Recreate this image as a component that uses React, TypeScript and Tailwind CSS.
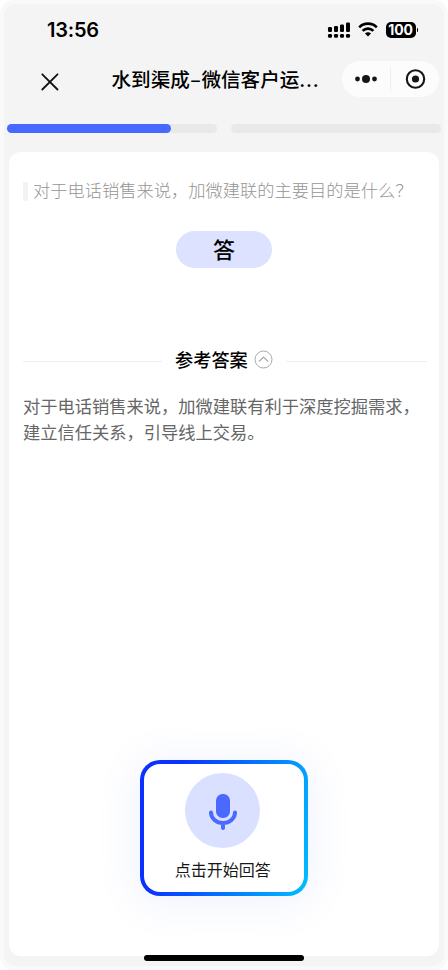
function StatusBar() {
  return (
    <div className="flex h-[52px] items-center justify-between pl-[43px] pr-[26px] font-['Inter','Liberation_Sans',sans-serif]">
      <span className="text-[20px] leading-6 font-semibold tracking-[-0.2px]">13:56</span>
      <div className="flex items-center">
        <svg width="24" height="17" viewBox="0 0 24 17">
          <rect x="1" y="5" width="4" height="5" rx="1.3" />
          <rect x="7" y="4" width="4" height="6" rx="1.3" />
          <rect x="13" y="2.5" width="4" height="7.5" rx="1.3" />
          <rect x="19" y="0.5" width="4" height="9.5" rx="1.3" />
          <rect x="1" y="12" width="4" height="3.7" rx="1.3" />
          <rect x="7" y="12" width="4" height="3.7" rx="1.3" />
          <rect x="13" y="12" width="4" height="3.7" rx="1.3" />
          <rect x="19" y="12" width="4" height="3.7" rx="1.3" />
        </svg>
        <svg className="-mt-px ml-[7px]" width="20" height="15" viewBox="0 0 20 15" fill="none" stroke="#000" strokeWidth="2.6">
          <path d="M1.2 5.3a12.4 12.4 0 0 1 17.6 0" />
          <path d="M4.6 8.9a7.6 7.6 0 0 1 10.8 0" />
          <path d="M10 14.5l-3-3a4.2 4.2 0 0 1 6 0z" fill="#000" stroke="none" />
        </svg>
        <div className="ml-[8px] flex h-4 w-[30px] items-center justify-center rounded-[5px] bg-black text-[14px] leading-none font-bold tracking-[-0.2px] text-white">100</div>
        <div className="ml-px h-1 w-[1.5px] rounded-r bg-black" />
      </div>
    </div>
  );
}

function NavBar() {
  return (
    <div className="flex h-[47px] items-center">
      <svg className="mt-[5px] ml-[36.5px] shrink-0" width="18" height="18" viewBox="0 0 18 18" fill="none" stroke="#111" strokeWidth="1.8" strokeLinecap="round">
        <path d="M1.3 1.3l15.2 15.2M16.5 1.3L1.3 16.5" />
      </svg>
      <h1 className="ml-[53px] w-[230px] shrink-0 whitespace-nowrap text-[19.6px] leading-7 font-medium">
        水到渠成<span className="inline-block w-[11.5px] text-center">–</span>微信客户运<span className="font-['Inter',sans-serif] tracking-[0.8px]">...</span>
      </h1>
      <div className="-mt-px flex h-9 w-[97px] shrink-0 items-center rounded-full bg-[#fcfcfc]">
        <svg width="97" height="36" viewBox="0 0 97 36" fill="#151515">
          <circle cx="15.5" cy="18" r="2.4" />
          <circle cx="24" cy="18" r="4" />
          <circle cx="32.5" cy="18" r="2.4" />
          <path d="M48.5 6v24" stroke="#eee" />
          <circle cx="73.5" cy="18" r="8.7" fill="none" stroke="#151515" strokeWidth="2.1" />
          <circle cx="73.5" cy="18" r="3.6" />
        </svg>
      </div>
    </div>
  );
}

export default function App() {
  return (
    <div className="h-[970px] w-[448px] rounded-[14px] bg-[#f9f9f9] p-1 font-['Noto_Sans_CJK_SC',sans-serif] text-black">
      <div className="flex h-[962px] flex-col overflow-hidden rounded-[12px] bg-[#f4f4f4]">
        <StatusBar />
        <NavBar />
        <div className="mt-[21px] flex shrink-0 gap-[14px] px-[3px]">
          <div className="h-[9px] w-[210px] rounded-full bg-[#e9e9e9]">
            <div className="h-full w-[163.5px] rounded-full bg-[#4869ff]" />
          </div>
          <div className="h-[9px] w-[210px] rounded-full bg-[#e9e9e9]" />
        </div>
        <main className="mt-[19px] ml-[5px] flex h-[804px] w-[430px] shrink-0 flex-col items-center rounded-[12px] bg-white">
          <div className="mt-[26px] flex h-6 w-full items-center pl-[14px]">
            <div className="mt-[3px] h-[19px] w-[5px] shrink-0 bg-[#f3f3f3]" />
            <p className="ml-[5px] whitespace-nowrap text-[17.25px] leading-6 font-light text-[#959595]">对于电话销售来说，加微建联的主要目的是什么？</p>
          </div>
          <div className="mt-[29px] flex h-[37px] w-24 items-center justify-center rounded-full bg-[#dce2ff] pb-[3px] text-[22px] leading-none font-medium">答</div>
          <div className="mt-[80px] flex h-6 w-full items-center pr-[12px] pl-[14px]">
            <div className="mt-[2px] h-px w-[139px] bg-[#eee]" />
            <span className="-mt-[2px] ml-[13px] text-[18.2px] leading-6 font-medium">参考答案</span>
            <svg className="-mt-px ml-[6.5px] shrink-0" width="19" height="19" viewBox="0 0 19 19" fill="none" stroke="#aaa">
              <circle cx="9.5" cy="9.5" r="8.5" />
              <path d="M5 11.5l4.5-4.5 4.5 4.5" strokeWidth="1.2" />
            </svg>
            <div className="mt-[2px] ml-[12.5px] h-px flex-1 bg-[#eee]" />
          </div>
          <p className="mt-[21px] w-full pl-[14px] text-[17.25px] leading-[25.5px] whitespace-nowrap text-[#666]">
            对于电话销售来说，加微建联有利于深度挖掘需求，<br />建立信任关系，引导线上交易。
          </p>
          <button className="mt-[316px] h-[136px] w-[168px] rounded-[20px] bg-linear-[105deg,#0a31ff_20%,#00bfff_100%] p-1 shadow-[0_4px_40px_5px_rgba(72,105,255,0.08)]">
            <span className="flex h-full w-full flex-col items-center rounded-[16px] bg-white pt-[9px] pr-[2.5px]">
              <span className="flex h-[75px] w-[75px] items-center justify-center rounded-full bg-[#dae0ff]">
                <svg width="30" height="38" viewBox="0 0 30 38" fill="none">
                  <rect x="8" y="2" width="14" height="24" rx="6.5" fill="#4b69ff" />
                  <path d="M3 20.5a12 10.5 0 0 0 24 0M15 31v5" stroke="#4b69ff" strokeWidth="4" strokeLinecap="round" />
                </svg>
              </span>
              <span className="mt-[8.5px] text-[16px] leading-6 text-[#181818]">点击开始回答</span>
            </span>
          </button>
        </main>
        <div className="-mt-px ml-[140px] h-[6px] w-40 shrink-0 rounded-full bg-black" />
      </div>
    </div>
  );
}
